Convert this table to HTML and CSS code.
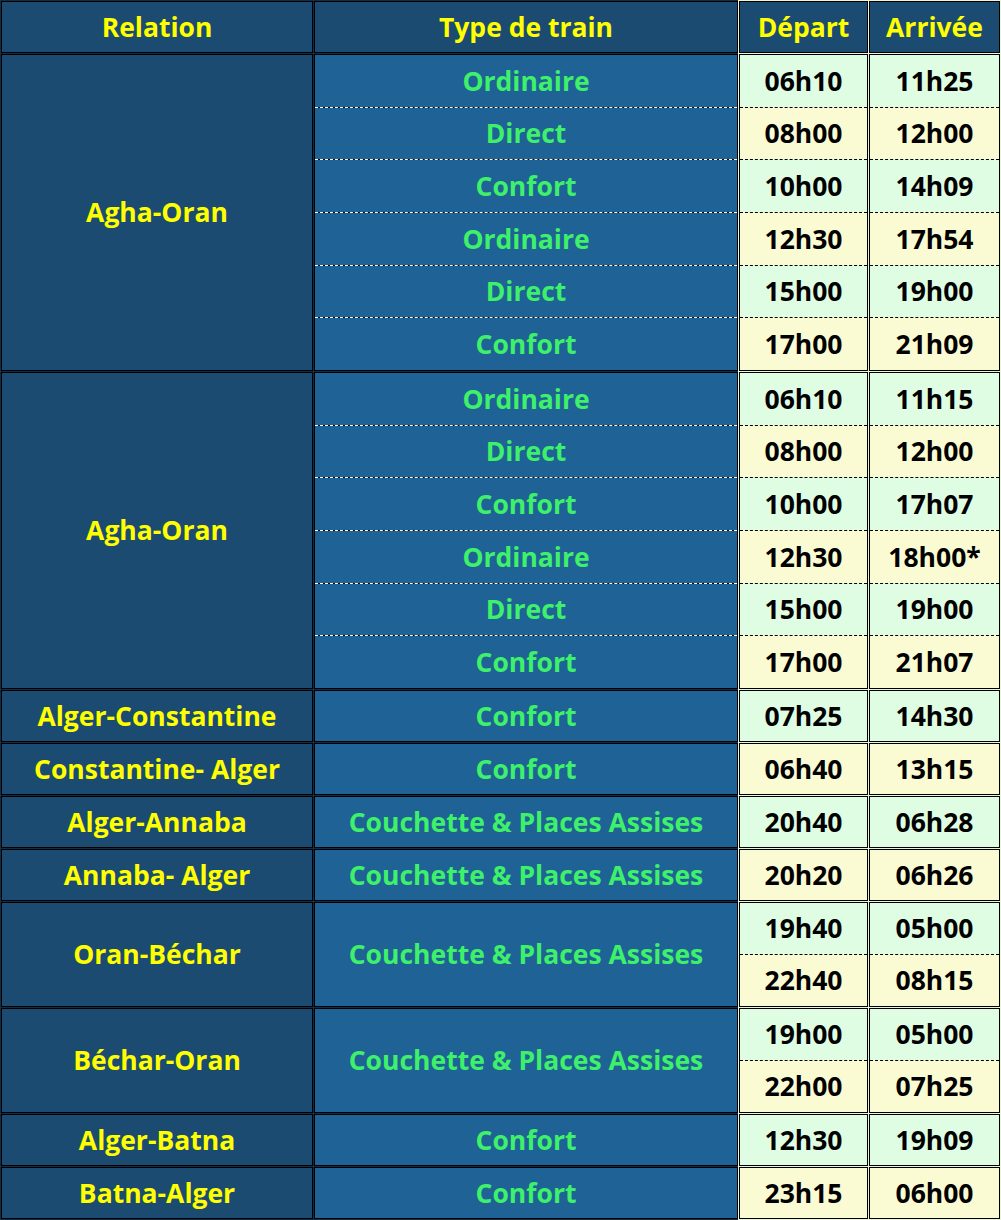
FILE: index.html
```html
<!DOCTYPE html>
<html lang="fr">
<head>
<meta charset="utf-8">
<title>Horaires des trains</title>
<link rel="stylesheet" href="styles.css">
</head>
<body>
<table class="timetable">
  <thead>
    <tr class="head">
      <th class="c-rel">Relation</th>
      <th class="c-type">Type de train</th>
      <th class="c-dep">Départ</th>
      <th class="c-arr">Arrivée</th>
    </tr>
  </thead>
  <tbody>
    <tr class="g6">
      <td class="rel">Agha-Oran</td>
      <td class="type"><div class="stack"><div>Ordinaire</div><div>Direct</div><div>Confort</div><div>Ordinaire</div><div>Direct</div><div>Confort</div></div></td>
      <td class="time"><div class="stack"><div class="g">06h10</div><div class="y">08h00</div><div class="g">10h00</div><div class="y">12h30</div><div class="g">15h00</div><div class="y">17h00</div></div></td>
      <td class="time"><div class="stack"><div class="g">11h25</div><div class="y">12h00</div><div class="g">14h09</div><div class="y">17h54</div><div class="g">19h00</div><div class="y">21h09</div></div></td>
    </tr>
    <tr class="g6">
      <td class="rel">Agha-Oran</td>
      <td class="type"><div class="stack"><div>Ordinaire</div><div>Direct</div><div>Confort</div><div>Ordinaire</div><div>Direct</div><div>Confort</div></div></td>
      <td class="time"><div class="stack"><div class="g">06h10</div><div class="y">08h00</div><div class="g">10h00</div><div class="y">12h30</div><div class="g">15h00</div><div class="y">17h00</div></div></td>
      <td class="time"><div class="stack"><div class="g">11h15</div><div class="y">12h00</div><div class="g">17h07</div><div class="y">18h00*</div><div class="g">19h00</div><div class="y">21h07</div></div></td>
    </tr>
    <tr class="g1">
      <td class="rel">Alger-Constantine</td>
      <td class="type">Confort</td>
      <td class="time g">07h25</td>
      <td class="time g">14h30</td>
    </tr>
    <tr class="g1">
      <td class="rel">Constantine- Alger</td>
      <td class="type">Confort</td>
      <td class="time y">06h40</td>
      <td class="time y">13h15</td>
    </tr>
    <tr class="g1">
      <td class="rel">Alger-Annaba</td>
      <td class="type">Couchette &amp; Places Assises</td>
      <td class="time g">20h40</td>
      <td class="time g">06h28</td>
    </tr>
    <tr class="g1">
      <td class="rel">Annaba- Alger</td>
      <td class="type">Couchette &amp; Places Assises</td>
      <td class="time y">20h20</td>
      <td class="time y">06h26</td>
    </tr>
    <tr class="g2">
      <td class="rel">Oran-Béchar</td>
      <td class="type">Couchette &amp; Places Assises</td>
      <td class="time"><div class="stack"><div class="g">19h40</div><div class="y">22h40</div></div></td>
      <td class="time"><div class="stack"><div class="g">05h00</div><div class="y">08h15</div></div></td>
    </tr>
    <tr class="g2">
      <td class="rel">Béchar-Oran</td>
      <td class="type">Couchette &amp; Places Assises</td>
      <td class="time"><div class="stack"><div class="g">19h00</div><div class="y">22h00</div></div></td>
      <td class="time"><div class="stack"><div class="g">05h00</div><div class="y">07h25</div></div></td>
    </tr>
    <tr class="g1">
      <td class="rel">Alger-Batna</td>
      <td class="type">Confort</td>
      <td class="time g">12h30</td>
      <td class="time g">19h09</td>
    </tr>
    <tr class="g1">
      <td class="rel">Batna-Alger</td>
      <td class="type">Confort</td>
      <td class="time y">23h15</td>
      <td class="time y">06h00</td>
    </tr>
  </tbody>
</table>
</body>
</html>
```

FILE: styles.css
```css
html, body {
  margin: 0;
  padding: 0;
  background: #ffffff;
}

.timetable {
  border-collapse: separate;
  border-spacing: 1px;
  table-layout: fixed;
  width: 1001px;
  background: linear-gradient(to right, #102e48 0, #102e48 738px, #eaf6dc 738px, #eaf6dc 100%);
  font-family: "Open Sans", Lato, sans-serif;
  font-weight: 700;
  font-size: 26.5px;
}

.timetable th,
.timetable td {
  box-sizing: border-box;
  border: 1px solid #000;
  padding: 0;
  text-align: center;
  vertical-align: middle;
  line-height: 1;
}

.c-rel { width: 312px; }
.c-type { width: 424px; }
.c-dep { width: 129px; }
.c-arr { width: 131px; }

.head th {
  height: 52px;
  background: #1b4b71;
  color: #ffff00;
}

.g1 td { height: 52px; }
.g2 td { height: 105px; }
.g6 td { height: 317px; }

.rel {
  background: #1b4b71;
  color: #ffff00;
}

.type {
  background: #1f6296;
  color: #3ef06a;
}

.time {
  color: #000;
}

.g { background: #dffde3; }
.y { background: #fbfbd3; }

.stack {
  display: flex;
  flex-direction: column;
  height: 100%;
}

.stack > div {
  flex: 1 1 0;
  display: flex;
  align-items: center;
  justify-content: center;
}

.stack > div + div {
  border-top: 1px dashed #000;
}

.type .stack > div + div {
  border-top: 1px dashed #ffffff;
  background-image: linear-gradient(#000, #000);
  background-size: 100% 1px;
  background-repeat: no-repeat;
  background-origin: border-box;
  background-position: 0 0;
}
```
